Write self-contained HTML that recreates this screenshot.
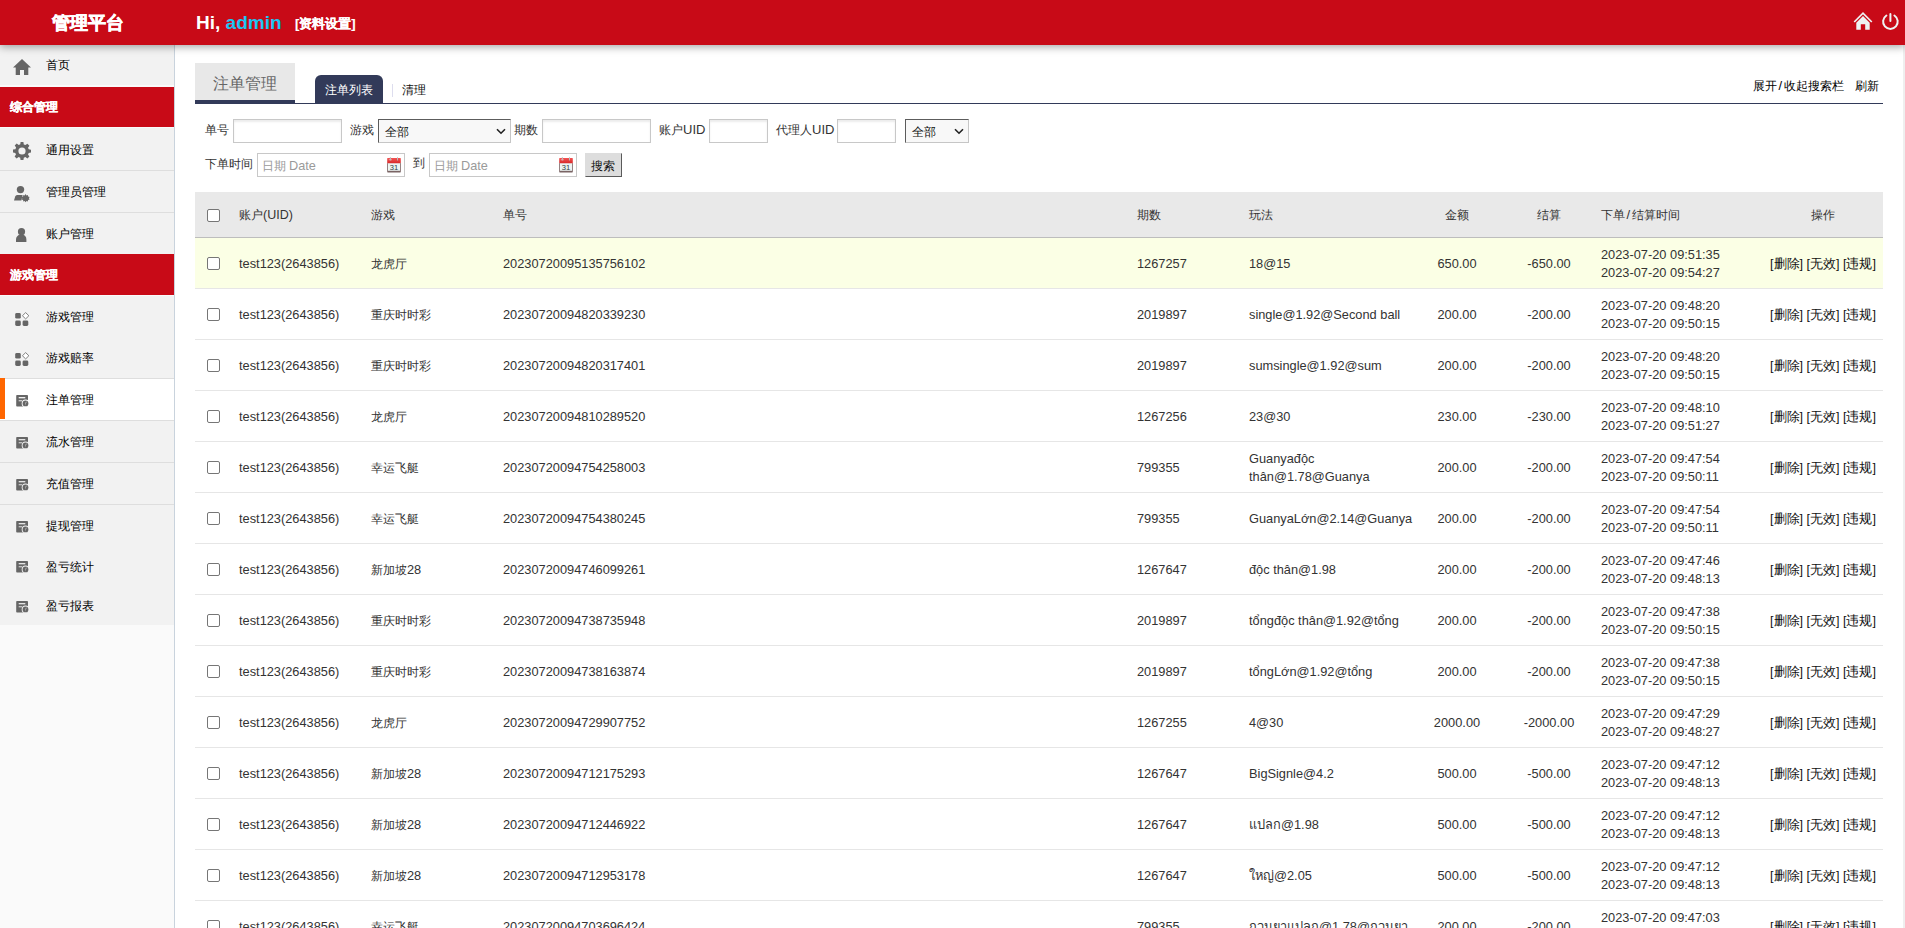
<!DOCTYPE html>
<html><head><meta charset="utf-8">
<style>
*{box-sizing:border-box}
html,body{margin:0;padding:0;width:1905px;height:928px;overflow:hidden;background:#fff;font-family:"Liberation Sans",sans-serif;color:#333}
.hdr{position:absolute;left:0;top:0;width:1905px;height:45px;background:#c80a17;box-shadow:0 2px 8px rgba(0,0,0,.35);z-index:5}
.hdr .logo{position:absolute;left:52px;top:11px;font-size:18px;font-weight:bold;color:#fff;line-height:24px;-webkit-text-stroke:.6px #fff}
.hdr .hi{position:absolute;left:196px;top:11px;font-size:19px;font-weight:bold;color:#fff;line-height:24px}
.hdr .hi b{color:#1cc5f2}
.hdr .set{position:absolute;left:295px;top:14px;-webkit-text-stroke:.15px #fff;font-size:13px;font-weight:bold;color:#fff;line-height:20px}
.side{position:absolute;left:0;top:45px;width:175px;height:883px;background:#fafafa;border-right:1px solid #c9d3dd}
.sbg{position:absolute;left:0;width:174px;background:#f2f2f2}
.it{position:absolute;left:0;width:174px;background:#f2f2f2;font-size:12px;color:#000}
.it span{position:absolute;left:46px;top:50%;transform:translateY(-50%);line-height:16px}
.sec{position:absolute;left:0;width:174px;height:40px;background:#c80a17;color:#fff;font-weight:bold;font-size:12px;-webkit-text-stroke:.25px #fff}
.sec span{position:absolute;left:10px;top:12px;line-height:16px}
.it svg{position:absolute}
.ln{position:absolute;left:0;width:174px;height:1px;background:#dedede}
.main{position:absolute;left:195px;top:0;width:1688px}
.tabbox{position:absolute;left:195px;top:63px;width:100px;height:37px;background:#e8e8e8;color:#666;font-size:16px;line-height:20px}
.tabbox span{position:absolute;left:18px;top:11px}
.tabbar{position:absolute;left:195px;top:100px;width:100px;height:4px;background:#323a59}
.tabline{position:absolute;left:195px;top:103px;width:1688px;height:1px;background:#323a59}
.tab1{position:absolute;left:315px;top:75px;width:68px;height:29px;background:#323a59;border-radius:6px 6px 0 0;color:#fff;font-size:12px;line-height:16px}
.tab1 span{position:absolute;left:10px;top:7px}
.sep{position:absolute;left:392px;top:84px;width:1px;height:13px;background:#dde}
.tab2{position:absolute;left:402px;top:82px;font-size:12px;line-height:16px;color:#111}
.rlinks{position:absolute;top:78px;font-size:12px;line-height:16px;color:#000}
.lbl{position:absolute;font-size:12px;line-height:16px;color:#333}
.inp{position:absolute;height:24px;border:1px solid #c8c8c8;background:#fff;box-shadow:inset 0 2px 2px rgba(0,0,0,.08)}
.sel{position:absolute;height:24px;background:#f8f8f8;border:1px solid #c6c6c6;border-top-color:#5c5c5c;border-left-color:#5c5c5c;font-size:12px;color:#111}
.sel span{position:absolute;left:6px;top:4px;line-height:16px}
.sel svg{position:absolute;top:8px}
.date{box-shadow:none}
.date span{position:absolute;left:3.5px;top:4px;font-size:12.7px;line-height:16px;color:#9a9a9a}
.date svg{position:absolute}
.btn{position:absolute;left:585px;top:153px;width:37px;height:24px;background:#dddddd;border:1px solid #dddddd;border-right-color:#5a5a5a;border-bottom-color:#5a5a5a;font-size:12px;color:#111}
.btn span{position:absolute;left:5px;top:4px;line-height:16px}
table{position:absolute;left:195px;top:192px;width:1688px;border-collapse:collapse;table-layout:fixed;font-size:12.8px;color:#333}
th{height:45px;background:#e9e9e9;font-weight:normal;text-align:left;border-bottom:1px solid #bdbdbd;padding:2px 0 0 0;font-size:12px;color:#333;vertical-align:middle}
td{height:51px;border-bottom:1px solid #e6e6e6;padding:2px 0 0 0;vertical-align:middle;line-height:18px}
tr.hl td{background:#fbffe5}
.cb{display:block;width:13px;height:13px;border:1px solid #767676;border-radius:2px;background:#fff;margin-left:12px}
.c2,.c3,.c4,.c5,.c6{padding-left:8px}
.c9{padding-left:6px}
.c6{padding-right:0}
.c7,.c8,.c10{text-align:center}
.z{font-size:12px}
td.c10{font-size:12.5px;color:#111}
</style></head><body>
<div class="hdr">
  <div class="logo">管理平台</div>
  <div class="hi">Hi, <b>admin</b></div>
  <div class="set">[资料设置]</div>
  <svg style="position:absolute;left:1853px;top:11px" width="20" height="20" viewBox="0 0 20 20">
    <path d="M1.2 11 L10 2.2 L18.8 11" fill="none" stroke="#eef3f3" stroke-width="1.7"/>
    <path d="M3.3 11.7 L10 5 L16.7 11.7 V18.7 H12.2 V13.2 H7.8 V18.7 H3.3 Z" fill="#eef3f3"/>
  </svg>
  <svg style="position:absolute;left:1880px;top:11px" width="21" height="21" viewBox="0 0 21 21">
    <path d="M6.4 4.5 A7.3 7.3 0 1 0 14.4 4.5" fill="none" stroke="#eef3f3" stroke-width="2" stroke-linecap="round"/>
    <path d="M10.4 2.9 V10.1" stroke="#eef3f3" stroke-width="2" stroke-linecap="round"/>
  </svg>
</div>

<div class="side"></div>
<div class="sbg" style="top:45px;height:40px"></div>
<div class="it" style="top:45px;height:40px"><svg style="left:13px;top:14px" width="18" height="17" viewBox="0 0 18 17"><path d="M9 0 L18 8.5 H15.3 V16 H11 V11 H7 V16 H2.7 V8.5 H0 Z" fill="#666"/></svg><span>首页</span></div>
<div class="sec" style="top:87px"><span>综合管理</span></div>
<div class="it" style="top:128px;height:42px"><svg style="left:13px;top:14px" width="18" height="18" viewBox="0 0 18 18"><path d="M7.6 0h2.8l.4 2.4 1.6.7 2-1.4 2 2-1.4 2 .7 1.6 2.4.4v2.8l-2.4.4-.7 1.6 1.4 2-2 2-2-1.4-1.6.7-.4 2.4H7.6l-.4-2.4-1.6-.7-2 1.4-2-2 1.4-2-.7-1.6L0 10.4V7.6l2.4-.4.7-1.6-1.4-2 2-2 2 1.4 1.6-.7z M9 5.4A3.6 3.6 0 1 0 9 12.6 3.6 3.6 0 1 0 9 5.4z" fill="#666" fill-rule="evenodd"/></svg><span style="margin-top:1px">通用设置</span></div>
<div class="ln" style="top:170px"></div>
<div class="it" style="top:171px;height:41px"><svg style="left:13px;top:14px" width="18" height="18" viewBox="0 0 18 18"><circle cx="7.5" cy="4.6" r="3.7" fill="#666"/><path d="M1 15.4 L2.2 11.4 C2.8 10.4 3.8 10 5 10 H9.6 L8.4 15.4 Z" fill="#666"/><path d="M12.6 9.1l.9 1.3 1.4-.5.2 1.5 1.5.5-.7 1.3.7 1.3-1.5.5-.2 1.5-1.4-.5-.9 1.3-.9-1.3-1.4.5-.2-1.5-1.5-.5.7-1.3-.7-1.3 1.5-.5.2-1.5 1.4.5z" fill="#666"/></svg><span>管理员管理</span></div>
<div class="ln" style="top:212px"></div>
<div class="it" style="top:213px;height:41px"><svg style="left:13px;top:14px" width="18" height="18" viewBox="0 0 18 18"><circle cx="8.5" cy="4.7" r="3.6" fill="#666"/><path d="M3 14.9 V12.6 C3 9.4 5.2 7.4 8.5 7.4 C11.8 7.4 13.4 9.4 13.4 12.6 V14.9 Z" fill="#666"/></svg><span>账户管理</span></div>
<div class="sec" style="top:254px;height:41px"><span style="top:13px">游戏管理</span></div>
<div class="it" style="top:296px;height:41px"><svg style="left:14px;top:16px" width="16" height="16" viewBox="0 0 16 16"><rect x="1.2" y="1" width="5.6" height="5.6" rx="1.4" fill="#666"/><rect x="1.2" y="8.5" width="5.6" height="5.5" rx="1.4" fill="#666"/><rect x="8.6" y="8.5" width="5.7" height="5.5" rx="1.4" fill="#666"/><path d="M11.65 0.6 L14.85 3.75 L11.65 6.9 L8.45 3.75 Z" fill="#fff" stroke="#6a6a6a" stroke-width=".85"/></svg><span>游戏管理</span></div>
<div class="it" style="top:337px;height:41px"><svg style="left:14px;top:15px" width="16" height="16" viewBox="0 0 16 16"><rect x="1.2" y="1" width="5.6" height="5.6" rx="1.4" fill="#666"/><rect x="1.2" y="8.5" width="5.6" height="5.5" rx="1.4" fill="#666"/><rect x="8.6" y="8.5" width="5.7" height="5.5" rx="1.4" fill="#666"/><path d="M11.65 0.6 L14.85 3.75 L11.65 6.9 L8.45 3.75 Z" fill="#fff" stroke="#6a6a6a" stroke-width=".85"/></svg><span>游戏赔率</span></div>
<div class="ln" style="top:378px"></div>
<div class="it" style="top:379px;height:41px;background:#fff"><svg style="left:15px;top:16px" width="16" height="14" viewBox="0 0 16 14"><rect x="1.2" y="0" width="11.8" height="11.6" rx="0.8" fill="#666"/><rect x="3.7" y="2.1" width="6.6" height="1.2" fill="#fff"/><rect x="3.7" y="5.2" width="3.4" height="1.1" fill="#fff" opacity=".8"/><circle cx="10.5" cy="8.4" r="3.8" fill="#fff"/><circle cx="10.5" cy="8.4" r="2.9" fill="#666"/><path d="M10.2 10.4 L10.8 7 L11.6 6.6 Z" fill="#fff"/></svg><span>注单管理</span></div>
<div style="position:absolute;left:0;top:378px;width:5px;height:41px;background:#ff6600"></div>
<div class="ln" style="top:420px"></div>
<div class="it" style="top:421px;height:41px"><svg style="left:15px;top:16px" width="16" height="14" viewBox="0 0 16 14"><rect x="1.2" y="0" width="11.8" height="11.6" rx="0.8" fill="#666"/><rect x="3.7" y="2.1" width="6.6" height="1.2" fill="#f2f2f2"/><rect x="3.7" y="5.2" width="3.4" height="1.1" fill="#f2f2f2" opacity=".8"/><circle cx="10.5" cy="8.4" r="3.8" fill="#f2f2f2"/><circle cx="10.5" cy="8.4" r="2.9" fill="#666"/><path d="M10.2 10.4 L10.8 7 L11.6 6.6 Z" fill="#f2f2f2"/></svg><span>流水管理</span></div>
<div class="ln" style="top:462px"></div>
<div class="it" style="top:463px;height:41px"><svg style="left:15px;top:16px" width="16" height="14" viewBox="0 0 16 14"><rect x="1.2" y="0" width="11.8" height="11.6" rx="0.8" fill="#666"/><rect x="3.7" y="2.1" width="6.6" height="1.2" fill="#f2f2f2"/><rect x="3.7" y="5.2" width="3.4" height="1.1" fill="#f2f2f2" opacity=".8"/><circle cx="10.5" cy="8.4" r="3.8" fill="#f2f2f2"/><circle cx="10.5" cy="8.4" r="2.9" fill="#666"/><path d="M10.2 10.4 L10.8 7 L11.6 6.6 Z" fill="#f2f2f2"/></svg><span>充值管理</span></div>
<div class="ln" style="top:504px"></div>
<div class="it" style="top:505px;height:41px"><svg style="left:15px;top:16px" width="16" height="14" viewBox="0 0 16 14"><rect x="1.2" y="0" width="11.8" height="11.6" rx="0.8" fill="#666"/><rect x="3.7" y="2.1" width="6.6" height="1.2" fill="#f2f2f2"/><rect x="3.7" y="5.2" width="3.4" height="1.1" fill="#f2f2f2" opacity=".8"/><circle cx="10.5" cy="8.4" r="3.8" fill="#f2f2f2"/><circle cx="10.5" cy="8.4" r="2.9" fill="#666"/><path d="M10.2 10.4 L10.8 7 L11.6 6.6 Z" fill="#f2f2f2"/></svg><span>提现管理</span></div>
<div class="it" style="top:546px;height:40px"><svg style="left:15px;top:15px" width="16" height="14" viewBox="0 0 16 14"><rect x="1.2" y="0" width="11.8" height="11.6" rx="0.8" fill="#666"/><rect x="3.7" y="2.1" width="6.6" height="1.2" fill="#f2f2f2"/><rect x="3.7" y="5.2" width="3.4" height="1.1" fill="#f2f2f2" opacity=".8"/><circle cx="10.5" cy="8.4" r="3.8" fill="#f2f2f2"/><circle cx="10.5" cy="8.4" r="2.9" fill="#666"/><path d="M10.2 10.4 L10.8 7 L11.6 6.6 Z" fill="#f2f2f2"/></svg><span style="margin-top:1px">盈亏统计</span></div>
<div class="it" style="top:586px;height:39px"><svg style="left:15px;top:15px" width="16" height="14" viewBox="0 0 16 14"><rect x="1.2" y="0" width="11.8" height="11.6" rx="0.8" fill="#666"/><rect x="3.7" y="2.1" width="6.6" height="1.2" fill="#f2f2f2"/><rect x="3.7" y="5.2" width="3.4" height="1.1" fill="#f2f2f2" opacity=".8"/><circle cx="10.5" cy="8.4" r="3.8" fill="#f2f2f2"/><circle cx="10.5" cy="8.4" r="2.9" fill="#666"/><path d="M10.2 10.4 L10.8 7 L11.6 6.6 Z" fill="#f2f2f2"/></svg><span>盈亏报表</span></div>
<div class="tabbox"><span>注单管理</span></div>
<div class="tabline"></div>
<div class="tabbar"></div>
<div class="tab1"><span>注单列表</span></div>
<div class="sep"></div>
<div class="tab2">清理</div>
<div class="rlinks" style="left:1753px">展开<span style="display:inline-block;width:6.5px;text-align:center;font-size:13px">/</span>收起搜索栏</div>
<div class="rlinks" style="left:1855px">刷新</div>

<!-- search form -->
<div class="lbl" style="left:205px;top:122px">单号</div>
<div class="inp" style="left:233px;top:119px;width:109px"></div>
<div class="lbl" style="left:350px;top:122px">游戏</div>
<div class="sel" style="left:378px;top:119px;width:133px"><span>全部</span><svg style="left:117px" width="10" height="7" viewBox="0 0 10 7"><path d="M1 1.2 L5 5.2 L9 1.2" fill="none" stroke="#222" stroke-width="1.6"/></svg></div>
<div class="lbl" style="left:514px;top:122px">期数</div>
<div class="inp" style="left:542px;top:119px;width:109px"></div>
<div class="lbl" style="left:659px;top:122px">账户<span style="font-size:13px">UID</span></div>
<div class="inp" style="left:709px;top:119px;width:59px"></div>
<div class="lbl" style="left:776px;top:122px">代理人<span style="font-size:13px">UID</span></div>
<div class="inp" style="left:837px;top:119px;width:59px"></div>
<div class="sel" style="left:905px;top:119px;width:64px"><span>全部</span><svg style="left:48px" width="10" height="7" viewBox="0 0 10 7"><path d="M1 1.2 L5 5.2 L9 1.2" fill="none" stroke="#222" stroke-width="1.6"/></svg></div>

<div class="lbl" style="left:205px;top:156px">下单时间</div>
<div class="inp date"  style="left:257px;top:153px;width:148px"><span><i class="z" style="font-style:normal">日期</i> Date</span><svg style="left:129px;top:3px" width="15" height="16" viewBox="0 0 15 16"><defs><linearGradient id="rg" x1="0" y1="0" x2="0" y2="1"><stop offset="0" stop-color="#f25656"/><stop offset="1" stop-color="#d82a2a"/></linearGradient></defs><rect x="0.2" y="6" width="13.6" height="9.4" rx="0.6" fill="#7a6464"/><rect x="1" y="6" width="12" height="7.8" fill="#edf5f4"/><rect x="0.2" y="0.9" width="13.6" height="5.3" rx="0.6" fill="url(#rg)"/><rect x="1.8" y="2.4" width="3" height="0.8" fill="#fff" opacity=".6"/><rect x="2.9" y="0" width="1" height="3.6" rx=".5" fill="#bbb"/><rect x="10" y="0" width="1" height="3.6" rx=".5" fill="#bbb"/><text x="7" y="12.7" font-size="7.6" text-anchor="middle" fill="#2e3c3c" font-family="Liberation Sans">31</text></svg></div>
<div class="lbl" style="left:413px;top:155px">到</div>
<div class="inp date"  style="left:429px;top:153px;width:148px"><span><i class="z" style="font-style:normal">日期</i> Date</span><svg style="left:129px;top:3px" width="15" height="16" viewBox="0 0 15 16"><defs><linearGradient id="rg" x1="0" y1="0" x2="0" y2="1"><stop offset="0" stop-color="#f25656"/><stop offset="1" stop-color="#d82a2a"/></linearGradient></defs><rect x="0.2" y="6" width="13.6" height="9.4" rx="0.6" fill="#7a6464"/><rect x="1" y="6" width="12" height="7.8" fill="#edf5f4"/><rect x="0.2" y="0.9" width="13.6" height="5.3" rx="0.6" fill="url(#rg)"/><rect x="1.8" y="2.4" width="3" height="0.8" fill="#fff" opacity=".6"/><rect x="2.9" y="0" width="1" height="3.6" rx=".5" fill="#bbb"/><rect x="10" y="0" width="1" height="3.6" rx=".5" fill="#bbb"/><text x="7" y="12.7" font-size="7.6" text-anchor="middle" fill="#2e3c3c" font-family="Liberation Sans">31</text></svg></div>
<div class="btn"><span>搜索</span></div>

<table>
<colgroup><col style="width:36px"><col style="width:132px"><col style="width:132px"><col style="width:634px"><col style="width:112px"><col style="width:170px"><col style="width:92px"><col style="width:92px"><col style="width:168px"><col style="width:120px"></colgroup>
<tr><th><i class="cb"></i></th><th class="c2">账户<span style="font-size:12.5px">(UID)</span></th><th class="c3">游戏</th><th class="c4">单号</th><th class="c5">期数</th><th class="c6">玩法</th><th class="c7">金额</th><th class="c8">结算</th><th class="c9">下单<span style="display:inline-block;width:6.5px;text-align:center;font-size:13px">/</span>结算时间</th><th class="c10">操作</th></tr>
<tr class="hl"><td><i class="cb"></i></td><td class="c2">test123(2643856)</td><td class="c3"><span class="z">龙虎厅</span></td><td class="c4">20230720095135756102</td><td class="c5">1267257</td><td class="c6">18@15</td><td class="c7">650.00</td><td class="c8">-650.00</td><td class="c9">2023-07-20 09:51:35<br>2023-07-20 09:54:27</td><td class="c10">[删除] [无效] [违规]</td></tr>
<tr><td><i class="cb"></i></td><td class="c2">test123(2643856)</td><td class="c3"><span class="z">重庆时时彩</span></td><td class="c4">20230720094820339230</td><td class="c5">2019897</td><td class="c6">single@1.92@Second ball</td><td class="c7">200.00</td><td class="c8">-200.00</td><td class="c9">2023-07-20 09:48:20<br>2023-07-20 09:50:15</td><td class="c10">[删除] [无效] [违规]</td></tr>
<tr><td><i class="cb"></i></td><td class="c2">test123(2643856)</td><td class="c3"><span class="z">重庆时时彩</span></td><td class="c4">20230720094820317401</td><td class="c5">2019897</td><td class="c6">sumsingle@1.92@sum</td><td class="c7">200.00</td><td class="c8">-200.00</td><td class="c9">2023-07-20 09:48:20<br>2023-07-20 09:50:15</td><td class="c10">[删除] [无效] [违规]</td></tr>
<tr><td><i class="cb"></i></td><td class="c2">test123(2643856)</td><td class="c3"><span class="z">龙虎厅</span></td><td class="c4">20230720094810289520</td><td class="c5">1267256</td><td class="c6">23@30</td><td class="c7">230.00</td><td class="c8">-230.00</td><td class="c9">2023-07-20 09:48:10<br>2023-07-20 09:51:27</td><td class="c10">[删除] [无效] [违规]</td></tr>
<tr><td><i class="cb"></i></td><td class="c2">test123(2643856)</td><td class="c3"><span class="z">幸运飞艇</span></td><td class="c4">20230720094754258003</td><td class="c5">799355</td><td class="c6">Guanyađộc thân@1.78@Guanya</td><td class="c7">200.00</td><td class="c8">-200.00</td><td class="c9">2023-07-20 09:47:54<br>2023-07-20 09:50:11</td><td class="c10">[删除] [无效] [违规]</td></tr>
<tr><td><i class="cb"></i></td><td class="c2">test123(2643856)</td><td class="c3"><span class="z">幸运飞艇</span></td><td class="c4">20230720094754380245</td><td class="c5">799355</td><td class="c6">GuanyaLớn@2.14@Guanya</td><td class="c7">200.00</td><td class="c8">-200.00</td><td class="c9">2023-07-20 09:47:54<br>2023-07-20 09:50:11</td><td class="c10">[删除] [无效] [违规]</td></tr>
<tr><td><i class="cb"></i></td><td class="c2">test123(2643856)</td><td class="c3"><span class="z">新加坡</span>28</td><td class="c4">20230720094746099261</td><td class="c5">1267647</td><td class="c6">độc thân@1.98</td><td class="c7">200.00</td><td class="c8">-200.00</td><td class="c9">2023-07-20 09:47:46<br>2023-07-20 09:48:13</td><td class="c10">[删除] [无效] [违规]</td></tr>
<tr><td><i class="cb"></i></td><td class="c2">test123(2643856)</td><td class="c3"><span class="z">重庆时时彩</span></td><td class="c4">20230720094738735948</td><td class="c5">2019897</td><td class="c6">tổngđộc thân@1.92@tổng</td><td class="c7">200.00</td><td class="c8">-200.00</td><td class="c9">2023-07-20 09:47:38<br>2023-07-20 09:50:15</td><td class="c10">[删除] [无效] [违规]</td></tr>
<tr><td><i class="cb"></i></td><td class="c2">test123(2643856)</td><td class="c3"><span class="z">重庆时时彩</span></td><td class="c4">20230720094738163874</td><td class="c5">2019897</td><td class="c6">tổngLớn@1.92@tổng</td><td class="c7">200.00</td><td class="c8">-200.00</td><td class="c9">2023-07-20 09:47:38<br>2023-07-20 09:50:15</td><td class="c10">[删除] [无效] [违规]</td></tr>
<tr><td><i class="cb"></i></td><td class="c2">test123(2643856)</td><td class="c3"><span class="z">龙虎厅</span></td><td class="c4">20230720094729907752</td><td class="c5">1267255</td><td class="c6">4@30</td><td class="c7">2000.00</td><td class="c8">-2000.00</td><td class="c9">2023-07-20 09:47:29<br>2023-07-20 09:48:27</td><td class="c10">[删除] [无效] [违规]</td></tr>
<tr><td><i class="cb"></i></td><td class="c2">test123(2643856)</td><td class="c3"><span class="z">新加坡</span>28</td><td class="c4">20230720094712175293</td><td class="c5">1267647</td><td class="c6">BigSignle@4.2</td><td class="c7">500.00</td><td class="c8">-500.00</td><td class="c9">2023-07-20 09:47:12<br>2023-07-20 09:48:13</td><td class="c10">[删除] [无效] [违规]</td></tr>
<tr><td><i class="cb"></i></td><td class="c2">test123(2643856)</td><td class="c3"><span class="z">新加坡</span>28</td><td class="c4">20230720094712446922</td><td class="c5">1267647</td><td class="c6">แปลก@1.98</td><td class="c7">500.00</td><td class="c8">-500.00</td><td class="c9">2023-07-20 09:47:12<br>2023-07-20 09:48:13</td><td class="c10">[删除] [无效] [违规]</td></tr>
<tr><td><i class="cb"></i></td><td class="c2">test123(2643856)</td><td class="c3"><span class="z">新加坡</span>28</td><td class="c4">20230720094712953178</td><td class="c5">1267647</td><td class="c6">ใหญ่@2.05</td><td class="c7">500.00</td><td class="c8">-500.00</td><td class="c9">2023-07-20 09:47:12<br>2023-07-20 09:48:13</td><td class="c10">[删除] [无效] [违规]</td></tr>
<tr><td><i class="cb"></i></td><td class="c2">test123(2643856)</td><td class="c3"><span class="z">幸运飞艇</span></td><td class="c4">20230720094703696424</td><td class="c5">799355</td><td class="c6">กวนยาแปลก@1.78@กวนยา</td><td class="c7">200.00</td><td class="c8">-200.00</td><td class="c9">2023-07-20 09:47:03<br>2023-07-20 09:50:11</td><td class="c10">[删除] [无效] [违规]</td></tr>
</table>
<div style="position:absolute;left:1903px;top:45px;width:2px;height:883px;background:#efefef"></div>
</body></html>
